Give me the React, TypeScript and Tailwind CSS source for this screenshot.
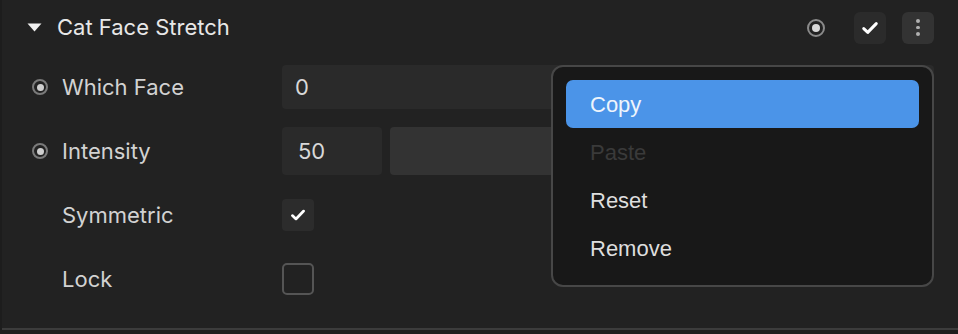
import { ReactNode } from "react";

const Dot = ({ big }: { big?: boolean }) => (
  <span
    className={
      big
        ? "flex h-[18px] w-[18px] items-center justify-center rounded-full border-2 border-[#8a8a8a]"
        : "flex h-[16px] w-[16px] items-center justify-center rounded-full border-2 border-[#7a7a7a]"
    }
  >
    <span className={big ? "h-[8px] w-[8px] rounded-full bg-[#d8d8d8]" : "h-[7px] w-[7px] rounded-full bg-[#cfcfcf]"} />
  </span>
);

const Check = ({ size }: { size: number }) => (
  <svg width={size} height={size} viewBox="0 0 16 16" fill="none">
    <path d="M3 8.5l3.2 3L13 4.5" stroke="#fff" strokeWidth="2.4" strokeLinecap="round" strokeLinejoin="round" />
  </svg>
);

const Row = ({ dot, label, children }: { dot?: boolean; label: string; children: ReactNode }) => (
  <div className="flex h-[64px] items-center">
    <div className="flex w-[60px] justify-end pr-[14px]">{dot && <Dot />}</div>
    <span className="w-[220px] text-[22px] text-[#d2d2d2]">{label}</span>
    <div className="flex flex-1 items-center pr-[24px]">{children}</div>
  </div>
);

const menuItems = ["Copy", "Paste", "Reset", "Remove"];

export default function App() {
  return (
    <div className="relative h-[334px] w-[958px] overflow-hidden bg-[#1d1d1d] font-['Inter',sans-serif]">
      <div className="ml-[2px] h-[330px] border-b-2 border-[#3c3c3c] bg-[#222222]">
        <div className="flex h-[55px] items-center pl-[25px] pr-[24px]">
          <svg width="15" height="9" viewBox="0 0 15 9">
            <path d="M0.5 0.5h14L7.5 8.5z" fill="#f0f0f0" />
          </svg>
          <span className="ml-[15px] text-[22px] text-[#e8e8e8]">Cat Face Stretch</span>
          <div className="ml-auto flex items-center">
            <Dot big />
            <div className="ml-[29px] flex h-[32px] w-[32px] items-center justify-center rounded-[6px] bg-[#2b2b2b]">
              <Check size={20} />
            </div>
            <div className="ml-[16px] flex h-[32px] w-[32px] flex-col items-center justify-center gap-[3px] rounded-[6px] bg-[#333333]">
              <span className="h-[3.5px] w-[3.5px] rounded-full bg-[#b0b0b0]" />
              <span className="h-[3.5px] w-[3.5px] rounded-full bg-[#b0b0b0]" />
              <span className="h-[3.5px] w-[3.5px] rounded-full bg-[#b0b0b0]" />
            </div>
          </div>
        </div>

        <Row dot label="Which Face">
          <div className="flex h-[44px] flex-1 items-center rounded-[4px] bg-[#2a2a2a] pl-[13px] text-[22px] text-[#d8d8d8]">0</div>
        </Row>
        <Row dot label="Intensity">
          <div className="flex h-[48px] w-[100px] items-center rounded-[4px] bg-[#2a2a2a] pl-[16px] text-[22px] text-[#d8d8d8]">50</div>
          <div className="ml-[8px] h-[48px] flex-1 rounded-[4px] bg-[#333333]" />
        </Row>
        <Row label="Symmetric">
          <div className="flex h-[32px] w-[32px] items-center justify-center rounded-[4px] bg-[#2c2c2c]">
            <Check size={18} />
          </div>
        </Row>
        <Row label="Lock">
          <div className="h-[32px] w-[32px] rounded-[5px] border-2 border-[#555555]" />
        </Row>
      </div>

      <div className="absolute left-[551px] top-[65px] flex w-[383px] flex-col rounded-[12px] border-2 border-[#474747] bg-[#181818] px-[13px] py-[13px] font-['Liberation_Sans',Arial,sans-serif] text-[22px]">
        {menuItems.map((item, i) => (
          <div
            key={item}
            className={
              i === 0
                ? "flex h-[48px] items-center rounded-[7px] bg-[#4b94e8] pl-[24px] text-[#eef4fc]"
                : item === "Paste"
                ? "flex h-[48px] items-center pl-[24px] text-[#3a3a3a]"
                : "flex h-[48px] items-center pl-[24px] text-[#dedede]"
            }
          >
            {item}
          </div>
        ))}
      </div>
    </div>
  );
}
